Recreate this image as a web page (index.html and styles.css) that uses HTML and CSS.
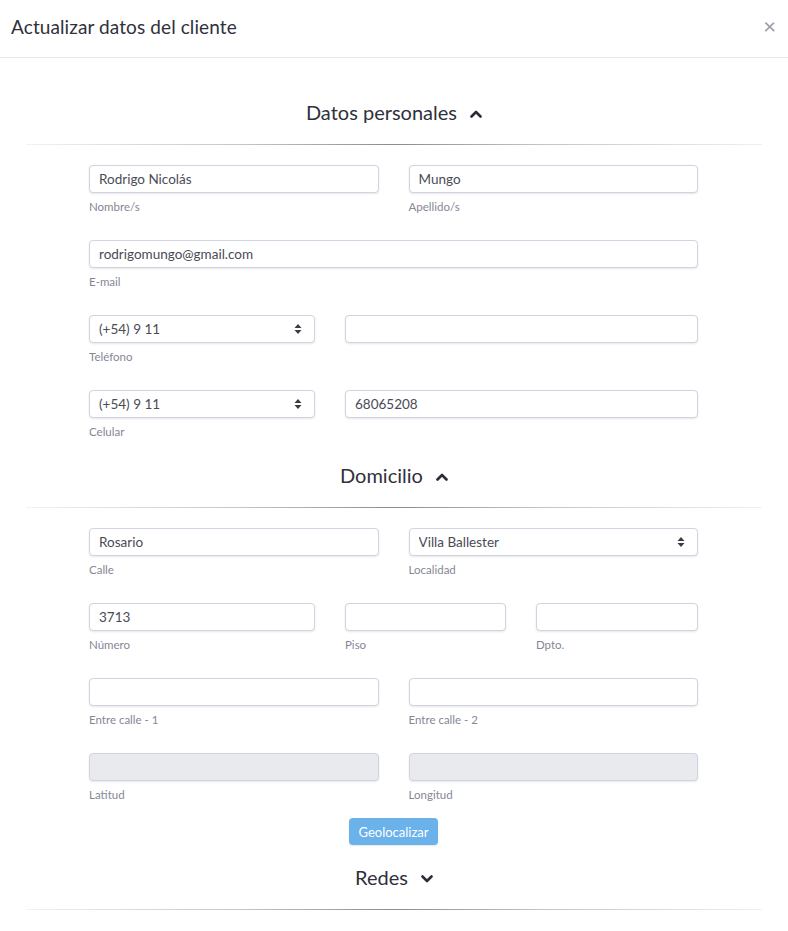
FILE: index.html
```html
<!DOCTYPE html>
<html lang="es">
<head>
<meta charset="utf-8">
<title>Actualizar datos del cliente</title>
<link rel="stylesheet" href="styles.css">
</head>
<body>
<div class="modal">
  <div class="modal-header">
    <h5 class="modal-title">Actualizar datos del cliente</h5>
    <span class="close">&times;</span>
  </div>
  <div class="modal-body">
    <h4 class="section-title">Datos personales
      <svg class="chev" viewBox="0 0 12 8" width="12" height="8"><path d="M1.5 6.5 L6 2 L10.5 6.5" fill="none" stroke="#2b2c36" stroke-width="2.6" stroke-linecap="round" stroke-linejoin="round"/></svg>
    </h4>
    <hr class="sep">
    <div class="form form-personal">
      <div class="row cols-2">
        <div class="field"><input class="control" type="text" value="Rodrigo Nicolás"><label>Nombre/s</label></div>
        <div class="field"><input class="control" type="text" value="Mungo"><label>Apellido/s</label></div>
      </div>
      <div class="row cols-1">
        <div class="field"><input class="control" type="text" value="rodrigomungo@gmail.com"><label>E-mail</label></div>
      </div>
      <div class="row cols-phone">
        <div class="field">
          <div class="select-wrap"><select class="control"><option>(+54) 9 11</option></select>
            <svg class="updown" viewBox="0 0 8 12" width="8" height="12"><path d="M4 1 L7.5 5 L0.5 5 Z M4 11 L7.5 7 L0.5 7 Z" fill="#3a3b45"/></svg></div>
          <label>Teléfono</label>
        </div>
        <div class="field"><input class="control" type="text" value=""></div>
      </div>
      <div class="row cols-phone">
        <div class="field">
          <div class="select-wrap"><select class="control"><option>(+54) 9 11</option></select>
            <svg class="updown" viewBox="0 0 8 12" width="8" height="12"><path d="M4 1 L7.5 5 L0.5 5 Z M4 11 L7.5 7 L0.5 7 Z" fill="#3a3b45"/></svg></div>
          <label>Celular</label>
        </div>
        <div class="field"><input class="control" type="text" value="68065208"></div>
      </div>
    </div>

    <h4 class="section-title">Domicilio
      <svg class="chev" viewBox="0 0 12 8" width="12" height="8"><path d="M1.5 6.5 L6 2 L10.5 6.5" fill="none" stroke="#2b2c36" stroke-width="2.6" stroke-linecap="round" stroke-linejoin="round"/></svg>
    </h4>
    <hr class="sep">
    <div class="form form-address">
      <div class="row cols-2">
        <div class="field"><input class="control" type="text" value="Rosario"><label>Calle</label></div>
        <div class="field">
          <div class="select-wrap"><select class="control"><option>Villa Ballester</option></select>
            <svg class="updown" viewBox="0 0 8 12" width="8" height="12"><path d="M4 1 L7.5 5 L0.5 5 Z M4 11 L7.5 7 L0.5 7 Z" fill="#3a3b45"/></svg></div>
          <label>Localidad</label>
        </div>
      </div>
      <div class="row cols-3">
        <div class="field"><input class="control" type="text" value="3713"><label>Número</label></div>
        <div class="field"><input class="control" type="text" value=""><label>Piso</label></div>
        <div class="field"><input class="control" type="text" value=""><label>Dpto.</label></div>
      </div>
      <div class="row cols-2">
        <div class="field"><input class="control" type="text" value=""><label>Entre calle - 1</label></div>
        <div class="field"><input class="control" type="text" value=""><label>Entre calle - 2</label></div>
      </div>
      <div class="row cols-2">
        <div class="field"><input class="control" type="text" value="" disabled><label>Latitud</label></div>
        <div class="field"><input class="control" type="text" value="" disabled><label>Longitud</label></div>
      </div>
      <div class="btn-row"><button class="btn" type="button">Geolocalizar</button></div>
    </div>

    <h4 class="section-title">Redes
      <svg class="chev" viewBox="0 0 12 8" width="12" height="8"><path d="M1.5 1.5 L6 6 L10.5 1.5" fill="none" stroke="#2b2c36" stroke-width="2.6" stroke-linecap="round" stroke-linejoin="round"/></svg>
    </h4>
    <hr class="sep">
  </div>
</div>
</body>
</html>
```

FILE: styles.css
```css
* { box-sizing: border-box; }
html, body { margin: 0; padding: 0; background: #fff; }
body {
  font-family: "Lato", "Open Sans", sans-serif;
  color: #3a3b45;
  width: 788px;
}
.modal { width: 788px; }
.modal-header {
  height: 58px;
  border-bottom: 1px solid #e3e6f0;
  display: flex;
  align-items: center;
  justify-content: space-between;
  padding: 0 12px 4px 11px;
}
.modal-title {
  margin: 0;
  font-size: 19px;
  font-weight: 400;
  color: #2f303c;
  letter-spacing: 0.1px;
}
.close {
  font-size: 22px;
  color: #9a9aa2;
  line-height: 1;
  margin-top: -1px;
}
.modal-body { padding: 39px 26px 20px; }
.section-title {
  margin: 0;
  height: 30px;
  line-height: 30px;
  text-align: center;
  font-size: 20px;
  font-weight: 400;
  color: #2f303c;
}
.chev { margin-left: 8px; vertical-align: 2px; }
.sep {
  margin: 17px 0 0;
  border: 0;
  height: 1px;
  background: linear-gradient(to right, #f2f2f2 0%, #c4c4c4 30%, #8c8c8c 50%, #c4c4c4 70%, #f0f0f0 100%);
}
.form {
  width: 609px;
  margin: 20px 0 0 63px;
}
.row {
  display: grid;
  column-gap: 30px;
  margin-bottom: 25px;
}
.form-personal .row:last-child { margin-bottom: 20px; }
.form-address .row:nth-last-child(2) { margin-bottom: 15px; }
.cols-1 { grid-template-columns: 1fr; }
.cols-2 { grid-template-columns: 1fr 1fr; }
.cols-phone { grid-template-columns: 226px 1fr; }
.cols-3 { grid-template-columns: 226px 161px 162px; }
.field { display: flex; flex-direction: column; }
.control {
  display: block;
  width: 100%;
  height: 28px;
  margin: 0;
  padding: 0 9px;
  font-family: "Lato", "Open Sans", sans-serif;
  font-size: 13.5px;
  color: #4a4b55;
  background: #fff;
  border: 1px solid #d1d3e2;
  border-radius: 4px;
  box-shadow: 0 1px 2px rgba(58, 59, 69, 0.12);
  outline: none;
}
.control:disabled { background: #e8eaee; }
select.control {
  -webkit-appearance: none;
  appearance: none;
}
.select-wrap { position: relative; }
.updown { position: absolute; right: 13px; top: 8px; }
.field label {
  display: block;
  margin-top: 6px;
  height: 16px;
  line-height: 16px;
  font-size: 11.5px;
  color: #858796;
}
.btn-row {
  display: flex;
  justify-content: center;
  margin-bottom: 17px;
}
.btn {
  width: 89px;
  height: 27px;
  border: 0;
  border-radius: 4px;
  background: #6bb1ea;
  color: #fff;
  font-family: "Lato", "Open Sans", sans-serif;
  font-size: 13px;
  padding: 0;
  box-shadow: 0 1px 2px rgba(0,0,0,0.1);
}
```
